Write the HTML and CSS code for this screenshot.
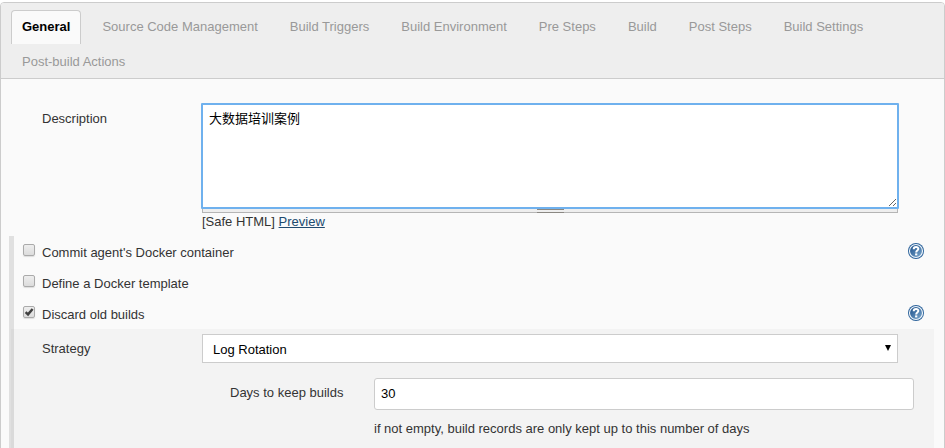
FILE: index.html
```
<!DOCTYPE html>
<html lang="en">
<head>
<meta charset="utf-8">
<title>Job Configuration</title>
<link rel="stylesheet" href="styles.css">
</head>
<body>
<svg class="defs" width="0" height="0" aria-hidden="true">
  <defs>
    <linearGradient id="blue" x1="0" y1="0" x2="1" y2="1">
      <stop offset="0" stop-color="#164a86"/>
      <stop offset="1" stop-color="#7fabd0"/>
    </linearGradient>
    <symbol id="help" viewBox="0 0 16 16">
      <circle cx="8" cy="8" r="8" fill="#2d639b"/>
      <circle cx="8" cy="8" r="6.5" fill="url(#blue)" stroke="#f2f7fb" stroke-width="1.1"/>
      <path d="M5.7 6.2C5.7 3.1 10.5 3.3 10.3 6C10.2 7.5 8.2 7.5 8.2 9.4" fill="none" stroke="#fff" stroke-width="2"/>
      <rect x="7.1" y="10.4" width="2.2" height="2" fill="#fff"/>
    </symbol>
  </defs>
</svg>
<main class="panel">
  <nav class="tabs">
    <a class="tab active">General</a>
    <a class="tab">Source Code Management</a>
    <a class="tab">Build Triggers</a>
    <a class="tab">Build Environment</a>
    <a class="tab">Pre Steps</a>
    <a class="tab">Build</a>
    <a class="tab">Post Steps</a>
    <a class="tab">Build Settings</a>
    <a class="tab">Post-build Actions</a>
  </nav>
  <section class="description">
    <label class="label" for="desc">Description</label>
    <div class="editor">
      <textarea id="desc" class="textarea">大数据培训案例</textarea>
      <div class="handle"><span class="grip"></span></div>
      <div class="preview">[Safe HTML] <a class="link">Preview</a></div>
    </div>
  </section>
  <section class="options">
    <div class="option"><span class="check"></span><span class="option-name">Commit agent's Docker container</span><svg class="help"><use href="#help"/></svg></div>
    <div class="option"><span class="check"></span><span class="option-name">Define a Docker template</span></div>
    <div class="option"><span class="check"><svg class="tick" viewBox="0 0 10 10"><path d="M1.6 5.2L4 7.4L8.6 2" fill="none" stroke="#404040" stroke-width="2.4"/></svg></span><span class="option-name">Discard old builds</span><svg class="help"><use href="#help"/></svg></div>
    <div class="nested">
      <div class="strategy"><span class="label">Strategy</span><div class="select"><span>Log Rotation</span><svg class="arrow" viewBox="0 0 6 6"><path d="M0 0H6L3 6Z"/></svg></div></div>
      <div class="days"><label class="days-label" for="days">Days to keep builds</label><div><input id="days" class="input" type="text" value="30"><div class="hint">if not empty, build records are only kept up to this number of days</div></div></div>
    </div>
  </section>
</main>
</body>
</html>
```
FILE: styles.css
```
* { box-sizing: border-box; }
body {
  margin: 0;
  height: 448px;
  overflow: hidden;
  background: #fff;
  color: #333;
  font: 13px/16px "Liberation Sans", "Noto Sans CJK SC", sans-serif;
}
.defs { display: block; }
.panel {
  height: 460px;
  margin-top: 2px;
  border: 1px solid #ccc;
  border-radius: 4px 4px 0 0;
  background: #fafafa;
}
.tabs {
  display: flex;
  flex-wrap: wrap;
  align-content: flex-start;
  column-gap: 10px;
  row-gap: 1px;
  height: 76px;
  padding: 7px 10px 0;
  border-bottom: 1px solid #ccc;
  border-radius: 3px 3px 0 0;
  background: #eee;
}
.tab {
  height: 34px;
  padding: 8px 10px 0;
  border: 1px solid transparent;
  border-bottom: 0;
  color: #999;
}
.tab.active {
  border-color: #ccc;
  border-radius: 4px 4px 0 0;
  background: #fafafa;
  color: #000;
  font-weight: bold;
}
.description {
  display: flex;
  height: 157px;
  padding: 24px 0 0 41px;
}
.label { width: 160px; flex: none; }
.description .label { padding-top: 8px; }
.editor { width: 696px; }
.textarea {
  display: block;
  width: 698px;
  height: 106px;
  margin: 0 0 0 -1px;
  padding: 4px 6px;
  border: 2px solid #6fb1ee;
  border-radius: 1px;
  outline: 0;
  background: #fff;
  color: #000;
  font: 13px/19px "Liberation Sans", "Noto Sans CJK SC", sans-serif;
  resize: vertical;
}
.handle {
  display: flex;
  justify-content: center;
  height: 4px;
  border: 1px solid #b5b5b5;
  border-top: 0;
  background: #eee;
}
.grip {
  width: 27px;
  height: 4px;
  border: solid #8a8782;
  border-width: 1px 0;
}
.preview { padding-top: 1px; }
.link { color: #204a6f; text-decoration: underline; }
.options {
  width: 925px;
  height: 224px;
  margin-left: 8px;
  border-left: 5px solid #e0e0e0;
}
.option {
  display: flex;
  height: 31px;
  padding: 9px 10px 0 9px;
}
.check {
  width: 12px;
  height: 12px;
  margin: -1px 7px 0 0;
  border: 1px solid #aaa;
  border-radius: 2px;
  background: linear-gradient(#eee, #dcdcdc);
  box-shadow: 0 1px 1px #ddd;
}
.tick { display: block; width: 10px; height: 10px; }
.option-name { flex: 1; }
.help { width: 16px; height: 16px; margin-top: -2px; }
.nested {
  height: 131px;
  margin-left: -3px;
  padding: 5px 0 0 28px;
  border-left: 3px solid #dadada;
  background: #f3f3f3;
}
.strategy { display: flex; }
.strategy .label { padding-top: 7px; }
.select {
  display: flex;
  justify-content: space-between;
  width: 696px;
  height: 29px;
  padding: 7px 6px 0 10px;
  border: 1px solid #ccc;
  background: #fff;
  color: #000;
}
.arrow { width: 6px; height: 6px; margin-top: 3px; }
.days { display: flex; padding: 15px 0 0 188px; }
.days-label { width: 144px; padding-top: 7px; }
.input {
  display: block;
  width: 540px;
  height: 32px;
  margin: 0;
  padding: 0 6px 2px;
  border: 1px solid #ccc;
  border-radius: 3px;
  background: #fff;
  color: #000;
  font: 13px "Liberation Sans", sans-serif;
}
.hint { padding-top: 11px; }
```
